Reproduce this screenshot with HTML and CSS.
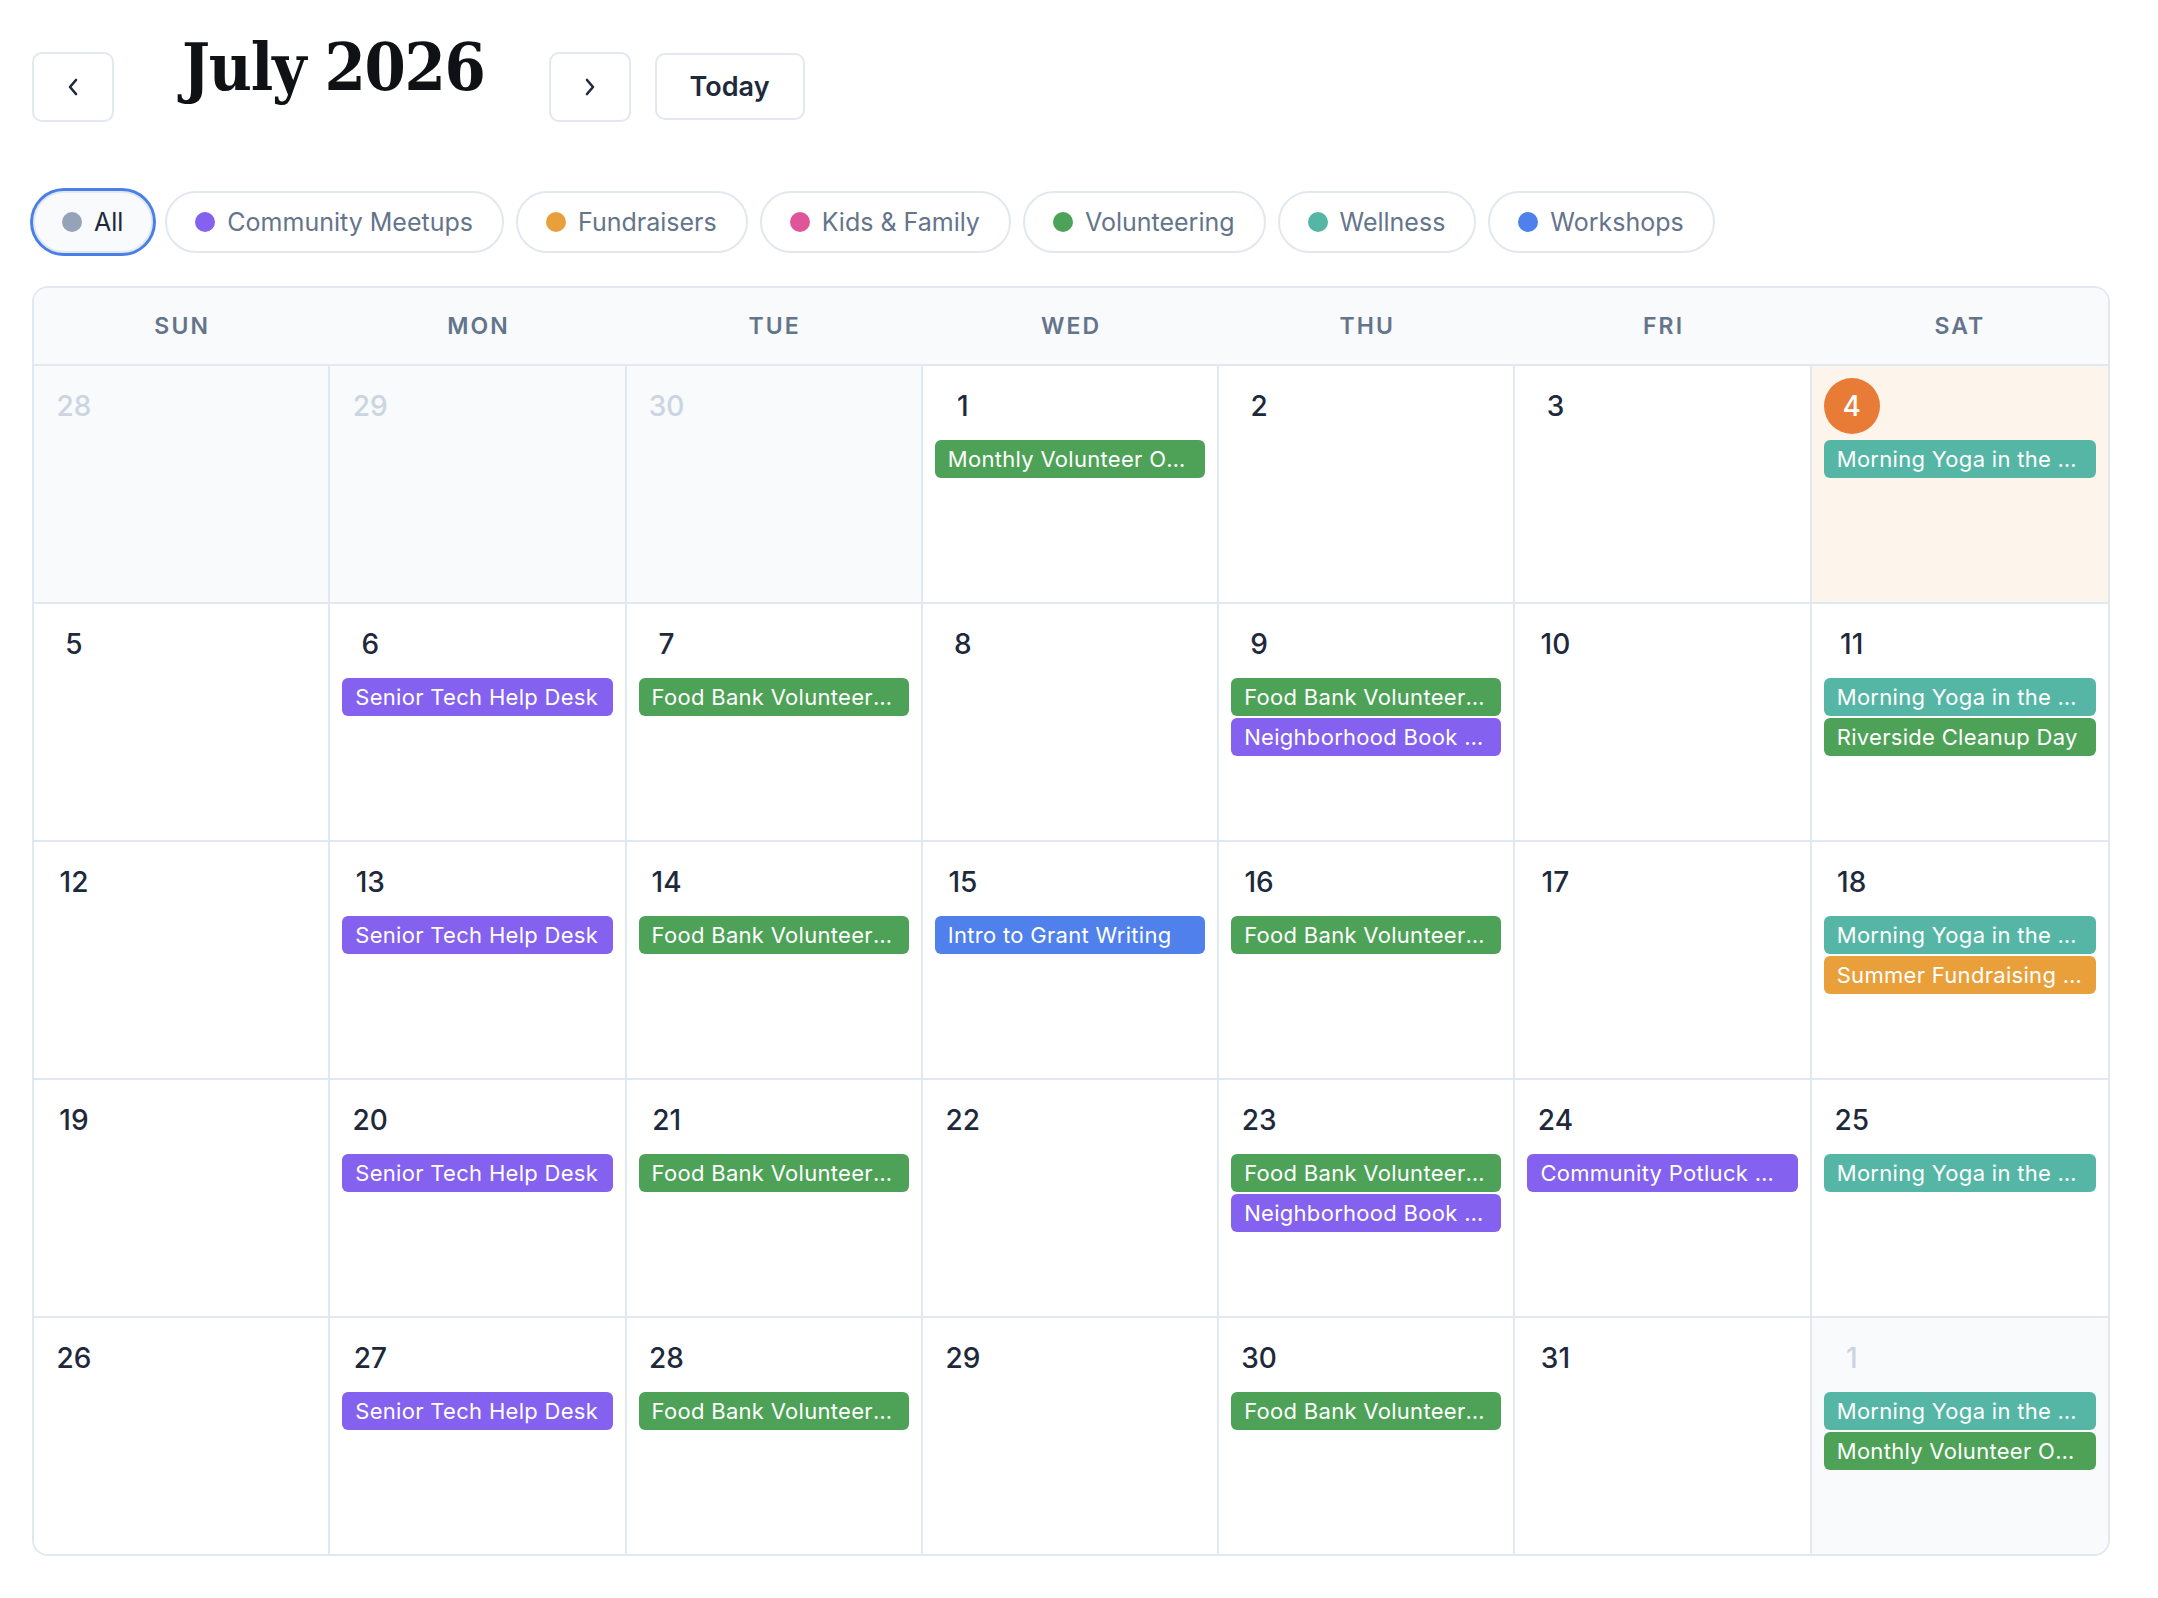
FILE: index.html
```html
<!DOCTYPE html>
<html lang="en">
<head>
<meta charset="utf-8">
<title>July 2026</title>
<link rel="stylesheet" href="styles.css">
</head>
<body>
<div class="page">
  <header class="header">
    <button class="nav-btn" aria-label="Previous month">
      <svg width="14" height="20" viewBox="0 0 14 20"><path d="M10 3 L4 10 L10 17" fill="none" stroke="#1e293b" stroke-width="2.6" stroke-linecap="round" stroke-linejoin="round"/></svg>
    </button>
    <h1 class="title">July 2026</h1>
    <button class="nav-btn" aria-label="Next month">
      <svg width="14" height="20" viewBox="0 0 14 20"><path d="M4 3 L10 10 L4 17" fill="none" stroke="#1e293b" stroke-width="2.6" stroke-linecap="round" stroke-linejoin="round"/></svg>
    </button>
    <button class="today-btn">Today</button>
  </header>

  <div class="filters">
    <button class="chip chip-active"><span class="dot dot-all"></span>All</button>
    <button class="chip"><span class="dot dot-meetup"></span>Community Meetups</button>
    <button class="chip"><span class="dot dot-fund"></span>Fundraisers</button>
    <button class="chip"><span class="dot dot-kids"></span>Kids &amp; Family</button>
    <button class="chip"><span class="dot dot-vol"></span>Volunteering</button>
    <button class="chip"><span class="dot dot-well"></span>Wellness</button>
    <button class="chip"><span class="dot dot-work"></span>Workshops</button>
  </div>

  <div class="calendar">
    <div class="weekdays">
      <div class="wd">SUN</div><div class="wd">MON</div><div class="wd">TUE</div><div class="wd">WED</div><div class="wd">THU</div><div class="wd">FRI</div><div class="wd">SAT</div>
    </div>
    <div class="grid">
      <!-- week 1 -->
      <div class="cell other"><div class="num">28</div></div>
      <div class="cell other"><div class="num">29</div></div>
      <div class="cell other"><div class="num">30</div></div>
      <div class="cell"><div class="num">1</div><div class="events"><div class="ev vol">Monthly Volunteer Orientation</div></div></div>
      <div class="cell"><div class="num">2</div></div>
      <div class="cell"><div class="num">3</div></div>
      <div class="cell today"><div class="num">4</div><div class="events"><div class="ev well">Morning Yoga in the Park</div></div></div>
      <!-- week 2 -->
      <div class="cell"><div class="num">5</div></div>
      <div class="cell"><div class="num">6</div><div class="events"><div class="ev meet">Senior Tech Help Desk</div></div></div>
      <div class="cell"><div class="num">7</div><div class="events"><div class="ev vol">Food Bank Volunteer Shift</div></div></div>
      <div class="cell"><div class="num">8</div></div>
      <div class="cell"><div class="num">9</div><div class="events"><div class="ev vol">Food Bank Volunteer Shift</div><div class="ev meet">Neighborhood Book Exchange</div></div></div>
      <div class="cell"><div class="num">10</div></div>
      <div class="cell"><div class="num">11</div><div class="events"><div class="ev well">Morning Yoga in the Park</div><div class="ev vol">Riverside Cleanup Day</div></div></div>
      <!-- week 3 -->
      <div class="cell"><div class="num">12</div></div>
      <div class="cell"><div class="num">13</div><div class="events"><div class="ev meet">Senior Tech Help Desk</div></div></div>
      <div class="cell"><div class="num">14</div><div class="events"><div class="ev vol">Food Bank Volunteer Shift</div></div></div>
      <div class="cell"><div class="num">15</div><div class="events"><div class="ev work">Intro to Grant Writing</div></div></div>
      <div class="cell"><div class="num">16</div><div class="events"><div class="ev vol">Food Bank Volunteer Shift</div></div></div>
      <div class="cell"><div class="num">17</div></div>
      <div class="cell"><div class="num">18</div><div class="events"><div class="ev well">Morning Yoga in the Park</div><div class="ev fund">Summer Fundraising Gala</div></div></div>
      <!-- week 4 -->
      <div class="cell"><div class="num">19</div></div>
      <div class="cell"><div class="num">20</div><div class="events"><div class="ev meet">Senior Tech Help Desk</div></div></div>
      <div class="cell"><div class="num">21</div><div class="events"><div class="ev vol">Food Bank Volunteer Shift</div></div></div>
      <div class="cell"><div class="num">22</div></div>
      <div class="cell"><div class="num">23</div><div class="events"><div class="ev vol">Food Bank Volunteer Shift</div><div class="ev meet">Neighborhood Book Exchange</div></div></div>
      <div class="cell"><div class="num">24</div><div class="events"><div class="ev meet">Community Potluck Dinner</div></div></div>
      <div class="cell"><div class="num">25</div><div class="events"><div class="ev well">Morning Yoga in the Park</div></div></div>
      <!-- week 5 -->
      <div class="cell"><div class="num">26</div></div>
      <div class="cell"><div class="num">27</div><div class="events"><div class="ev meet">Senior Tech Help Desk</div></div></div>
      <div class="cell"><div class="num">28</div><div class="events"><div class="ev vol">Food Bank Volunteer Shift</div></div></div>
      <div class="cell"><div class="num">29</div></div>
      <div class="cell"><div class="num">30</div><div class="events"><div class="ev vol">Food Bank Volunteer Shift</div></div></div>
      <div class="cell"><div class="num">31</div></div>
      <div class="cell other"><div class="num">1</div><div class="events"><div class="ev well">Morning Yoga in the Park</div><div class="ev vol">Monthly Volunteer Orientation</div></div></div>
    </div>
  </div>
</div>
</body>
</html>
```

FILE: styles.css
```css
* { box-sizing: border-box; }

html, body {
  margin: 0;
  background: #ffffff;
}

body {
  font-family: Inter, "Noto Sans", "Liberation Sans", sans-serif;
  color: #1e293b;
}

.page {
  padding: 30px 48px 40px 32px;
}

/* header */
.header {
  display: flex;
  align-items: flex-start;
}

.nav-btn {
  width: 82px;
  height: 70px;
  margin-top: 22px;
  border: 2px solid #e2e8f0;
  border-radius: 10px;
  background: #ffffff;
  display: flex;
  align-items: center;
  justify-content: center;
  padding: 0;
}

.title {
  margin: 0 64px 0 68px;
  font-family: "DejaVu Serif Condensed", "DejaVu Serif", serif;
  font-stretch: condensed;
  font-weight: 700;
  font-size: 66px;
  line-height: 74px;
  color: #0f1115;
  letter-spacing: -1.3px;
}

.today-btn {
  margin-top: 23px;
  margin-left: 24px;
  width: 150px;
  height: 67px;
  border: 2px solid #e2e8f0;
  border-radius: 10px;
  background: #ffffff;
  font-family: Inter, "Noto Sans", sans-serif;
  font-size: 27px;
  font-weight: 600;
  color: #1e293b;
  padding: 0;
}

/* filter chips */
.filters {
  display: flex;
  gap: 12px;
  margin-top: 69px;
  padding-left: 1px;
}

.chip {
  height: 62px;
  border: 2px solid #e2e8f0;
  border-radius: 31px;
  background: #ffffff;
  padding: 0 29px 0 28px;
  display: flex;
  align-items: center;
  gap: 12px;
  font-family: Inter, "Noto Sans", sans-serif;
  font-size: 25px;
  color: #64748b;
}

.chip-active {
  background: #f8fafc;
  color: #1e293b;
  padding: 0 28px 0 27px;
  box-shadow: 0 0 0 3px #4a7fe8;
}

.dot {
  width: 20px;
  height: 20px;
  border-radius: 50%;
  flex: none;
}
.dot-all { background: #94a3b8; }
.dot-meetup { background: #8461ee; }
.dot-fund { background: #e9a03b; }
.dot-kids { background: #de5599; }
.dot-vol { background: #4da257; }
.dot-well { background: #56b6a6; }
.dot-work { background: #4f80ec; }

/* calendar */
.calendar {
  margin-top: 33px;
  border: 2px solid #e2e8f0;
  border-radius: 16px;
  overflow: hidden;
}

.weekdays {
  display: grid;
  grid-template-columns: repeat(7, 1fr);
  height: 78px;
  background: #f8fafc;
  border-bottom: 2px solid #e2e8f0;
}

.wd {
  display: flex;
  align-items: center;
  justify-content: center;
  font-size: 23px;
  font-weight: 600;
  letter-spacing: 0.09em;
  color: #64748b;
}

.grid {
  display: grid;
  grid-template-columns: repeat(7, 1fr);
  grid-template-rows: repeat(4, 238px) 236px;
}

.cell {
  border-right: 2px solid #e2e8f0;
  border-bottom: 2px solid #e2e8f0;
  padding: 12px;
  background: #ffffff;
  min-width: 0;
}
.cell:nth-child(7n) { border-right: none; }
.cell:nth-last-child(-n+7) { border-bottom: none; }

.cell.other { background: #f8fafc; }
.cell.today { background: #fdf5eb; }

.num {
  width: 56px;
  height: 56px;
  border-radius: 50%;
  display: flex;
  align-items: center;
  justify-content: center;
  font-size: 28px;
  font-weight: 500;
  color: #1e293b;
}
.other .num { color: #cbd5e1; }
.today .num {
  background: #e87b36;
  color: #ffffff;
}

.events {
  margin-top: 6px;
  display: flex;
  flex-direction: column;
  gap: 2px;
}

.ev {
  height: 38px;
  line-height: 38px;
  padding: 0 13px;
  border-radius: 6px;
  color: #ffffff;
  font-size: 22px;
  font-weight: 400;
  white-space: nowrap;
  overflow: hidden;
  text-overflow: ellipsis;
  letter-spacing: 0.3px;
}
.ev.vol { background: #4da257; }
.ev.well { background: #56b6a6; }
.ev.meet { background: #8461ee; }
.ev.work { background: #4f80ec; }
.ev.fund { background: #e9a03b; }
```
